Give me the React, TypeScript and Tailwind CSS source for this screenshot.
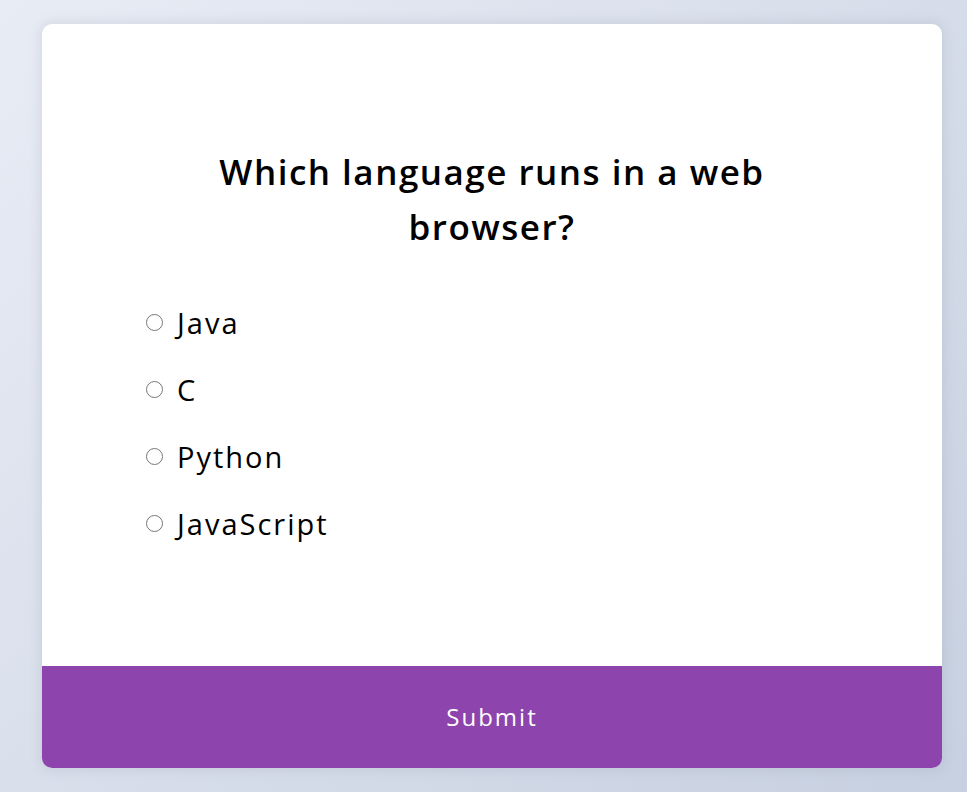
import React from "react";

const options = ["Java", "C", "Python", "JavaScript"];

export default function App() {
  return (
    <div
      className="w-full h-[792px] flex pt-[24px] pl-[42px] bg-[linear-gradient(135deg,#e8ecf5,#c7d0e0)]"
      style={{ fontFamily: '"Open Sans", "Noto Sans", sans-serif' }}
    >
      <div className="w-[900px] h-[744px] bg-white rounded-[10px] overflow-hidden flex flex-col shadow-[0_0_12px_2px_rgba(100,110,130,0.14)]">
        <div className="flex-1 pt-[120px]">
          <h2 className="mx-auto w-[620px] text-center text-[35px] leading-[55px] font-semibold tracking-[1.5px] text-black">
            Which language runs in a web browser?
          </h2>
          <ul className="mt-[35px] pl-[104px]">
            {options.map((o) => (
              <li key={o} className="h-[67px] flex items-center">
                <input
                  type="radio"
                  name="answer"
                  className="w-[17px] h-[17px] m-0 mr-[14px] shrink-0 accent-[#8e44ad]"
                />
                <label className="text-[29px] leading-[36px] tracking-[2px] text-black">{o}</label>
              </li>
            ))}
          </ul>
        </div>
        <button className="h-[102px] w-full shrink-0 bg-[#8e44ad] text-white text-[24px] tracking-[2px]">
          Submit
        </button>
      </div>
    </div>
  );
}
